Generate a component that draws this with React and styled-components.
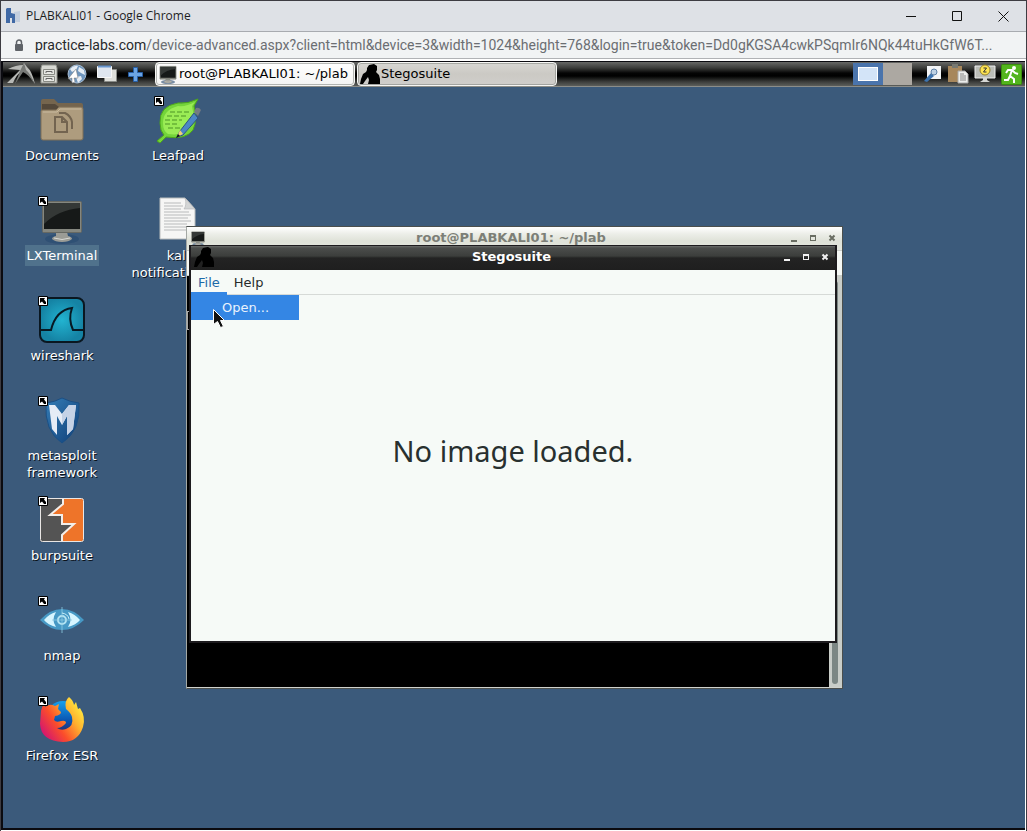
import React from "react";
import styled, { createGlobalStyle, css } from "styled-components";

const Global = createGlobalStyle`
  * { box-sizing: border-box; }
  body { margin: 0; background: #1c1b20; }
  button { font: inherit; color: inherit; background: none; border: 0; padding: 0; margin: 0; }
  a { color: inherit; text-decoration: none; }
  svg { display: block; flex: none; }
`;

const chromeFont = `Roboto, "Open Sans", sans-serif`;
const deskFont = `"DejaVu Sans", sans-serif`;

/* ---------- browser frame ---------- */
const Browser = styled.div`
  display: flex;
  flex-direction: column;
  min-height: 100vh;
  padding: 1px;
  background: #3d3c42;
  font-family: ${chromeFont};
`;
const TitleBar = styled.header`
  display: flex;
  align-items: center;
  height: 31px;
  padding-left: 5px;
  background: #dee1e6;
  border-bottom: 1px solid #a8abb0;
`;
const Title = styled.h1`
  flex: 1;
  margin: 0;
  padding-left: 5px;
  font-family: "Open Sans", sans-serif;
  font-size: 12px;
  line-height: 16px;
  font-weight: 400;
  color: #1d1d1f;
  white-space: nowrap;
`;
const ChromeButton = styled.button`
  display: flex;
  align-items: center;
  justify-content: center;
  width: 46px;
  height: 28px;
`;
const AddressBar = styled.div`
  display: flex;
  align-items: center;
  gap: 11px;
  height: 27px;
  padding: 0 12px 0 13px;
  background: #f1f3f4;
  border-bottom: 1px solid #b0b2b5;
`;
const Url = styled.a`
  flex: 1;
  min-width: 0;
  overflow: hidden;
  font-size: 14px;
  line-height: 20px;
  color: #6b6e72;
  white-space: nowrap;
  b { font-weight: 400; color: #27292c; }
`;
const Viewport = styled.main`
  display: flex;
  flex: 1;
  flex-direction: column;
  padding: 2px 1px 1px 0;
  background: #fff;
`;
const Screen = styled.div`
  display: flex;
  flex: 1;
  flex-direction: column;
  border: solid #0b0b10;
  border-width: 1px 0 2px 2px;
  font-family: ${deskFont};
`;

/* ---------- desktop panel ---------- */
const Panel = styled.nav`
  display: flex;
  align-items: center;
  height: 25px;
  padding: 0 3px 0 4px;
  background: linear-gradient(#676866 0, #3a3b39 6px, #050505 11px, #000 14px, #3e3f3d 20px, #5c5e5b 24px);
  border-bottom: 1px solid #8b8d89;
`;
const Launcher = styled.button`
  display: flex;
  align-items: center;
  justify-content: center;
  width: ${(p) => p.$w || 29}px;
  height: 24px;
`;
const Tasks = styled.div`
  display: flex;
  flex: 1;
  gap: 2px;
  padding-left: 7px;
`;
const Task = styled.button`
  display: flex;
  align-items: center;
  gap: 1px;
  width: 200px;
  height: 24px;
  padding: 0 2px;
  border: 1px solid #f6f6f4;
  border-radius: 4px;
  box-shadow: inset 0 0 0 1px #85888399;
  background: ${(p) => (p.$active ? "linear-gradient(#d8d7d3, #cbc9c4 50%, #d0cecb)" : "linear-gradient(#ffffff, #f4f4f3)")};
  font-size: 13px;
  line-height: 16px;
  color: #000;
  white-space: nowrap;
`;
const Desk = styled.button`
  display: flex;
  align-items: center;
  justify-content: center;
  width: ${(p) => (p.$current ? 30 : 29)}px;
  height: 22px;
  background: ${(p) => (p.$current ? "#4a74ac" : "#aca8a2")};
`;
const DeskPreview = styled.span`
  width: 20px;
  height: 14px;
  background: #d3e4f8;
  border: 1px solid #fff;
`;
const Tray = styled.div`
  display: flex;
  align-items: center;
  gap: 5px;
  padding-left: 12px;
`;
const TrayButton = styled.button`
  display: flex;
  height: 24px;
  align-items: center;
`;

/* ---------- desktop icons ---------- */
const Desktop = styled.section`
  position: relative;
  flex: 1;
  min-height: 741px;
  padding: 9px 1px;
  background: #3b5a7b;
`;
const IconGrid = styled.div`
  display: grid;
  grid-template-columns: repeat(2, 116px);
  grid-auto-rows: 100px;
`;
const Shortcut = styled.button`
  display: flex;
  flex-direction: column;
  align-items: center;
  grid-column: ${(p) => p.$col};
  grid-row: ${(p) => p.$row};
  font-size: 13px;
  line-height: 17px;
  color: #fff;
`;
const IconBox = styled.span`
  position: relative;
  width: 48px;
  height: 48px;
  margin-bottom: 1px;
`;
const Badge = styled.svg`
  position: absolute;
  top: 0;
  left: 0;
`;
const Label = styled.span`
  max-width: 104px;
  padding: 2px;
  text-shadow: 1px 1px 0 #000c;
  ${(p) => p.$selected && css`background: #50728c; text-shadow: none;`}
`;

/* ---------- windows ---------- */
const Window = styled.section`
  position: absolute;
  display: flex;
  flex-direction: column;
  left: ${(p) => p.$x}px;
  top: ${(p) => p.$y}px;
  width: ${(p) => p.$w}px;
  height: ${(p) => p.$h}px;
  border: solid ${(p) => (p.$dark ? "#1d1b1e" : "#4b4f4d")};
  border-left-color: ${(p) => (p.$dark ? "#1d1b1e" : "#a4a8a4")};
  border-width: ${(p) => (p.$dark ? "1px 2px 2px" : "1px")};
`;
const WindowBar = styled.header`
  display: flex;
  align-items: center;
  height: ${(p) => (p.$dark ? 24 : 23)}px;
  padding: 0 1px 2px 3px;
  color: ${(p) => (p.$dark ? "#fff" : "#7c7f77")};
  background: ${(p) => (p.$dark ? "linear-gradient(#6a6d6a 0, #4b4d4b 2px, #3c3e3c 10px, #232323 12px, #1f1f1f)" : "linear-gradient(#fff, #eceee8 7px, #dfe2d8 14px, #e4e7de)")};
`;
const WindowTitle = styled.h2`
  flex: 1;
  margin: 0;
  padding-left: 32px;
  font-size: 13px;
  line-height: 18px;
  font-weight: 700;
  text-align: center;
  white-space: nowrap;
`;
const WindowButton = styled.button`
  display: flex;
  width: 19px;
  height: 18px;
  align-items: center;
  justify-content: center;
`;
const TerminalMenu = styled.div`
  height: 26px;
  background: #f5f8f5;
  border: solid #c9ccc8;
  border-width: 1px 0;
`;
const TerminalBody = styled.div`
  display: flex;
  flex: 1;
  justify-content: space-between;
  background: #000;
  border-bottom: 1px solid #d0d2cc;
`;
const HollowCursor = styled.span`
  width: 8px;
  height: 19px;
  margin-top: 35px;
  border: 1px solid #aaa;
`;
const ScrollTrack = styled.div`
  display: flex;
  width: 13px;
  padding: 5px 4px 3px 3px;
  background: #c9cdc8;
`;
const ScrollThumb = styled.div`
  flex: 1;
  border-radius: 3px;
  background: #7c8784;
`;
const MenuBar = styled.div`
  display: flex;
  height: 25px;
  background: #f6faf7;
  border-bottom: 1px solid #d6dad7;
`;
const MenuItem = styled.button`
  height: 25px;
  padding: 0 7px;
  font-size: 13px;
  line-height: 24px;
  color: ${(p) => (p.$open ? "#1c6aa8" : "#272c2b")};
  ${(p) => p.$open && css`border-bottom: 3px solid #3486e4; line-height: 25px;`}
`;
const Canvas = styled.div`
  position: relative;
  display: flex;
  flex: 1;
  align-items: center;
  justify-content: center;
  background: #f6faf7;
`;
const Message = styled.p`
  margin: 0;
  padding-bottom: 34px;
  font-family: "Noto Sans", sans-serif;
  font-size: 29px;
  line-height: 32px;
  color: #28302f;
`;
const Dropdown = styled.div`
  position: absolute;
  top: 0;
  left: 0;
  width: 108px;
  background: #3486e4;
`;
const DropItem = styled.button`
  width: 100%;
  height: 25px;
  padding: 0 31px;
  font-size: 13px;
  line-height: 24px;
  color: #eaf3fd;
  text-align: left;
`;
const Pointer = styled.svg`
  position: absolute;
  left: 22px;
  top: 14px;
`;

/* ---------- drawings ---------- */
const Monitor = ({ w, h }) => (
  <svg width={w} height={h} viewBox="0 0 48 48" preserveAspectRatio="none">
    <ellipse cx="24" cy="43" rx="17" ry="5" fill="#284a70" opacity=".6" />
    <path d="M18 36h11l1 4q4 1 4 3-3 3-10 3t-10-3q0-2 4-3z" fill="#9b9c96" />
    <path d="M16 42q8 3 16 0" stroke="#d8d9d4" fill="none" />
    <rect x="4.500" y="5.500" width="39" height="31" rx="1" fill="#85877f" stroke="#666862" />
    <rect x="6" y="7" width="36" height="26" fill="#161918" />
    <path d="M6 7h36v5Q20 14 6 28z" fill="#343836" />
  </svg>
);
const Figure = () => (
  <svg width="20" height="20" viewBox="0 0 20 20">
    <path d="M7 4l2-3 5-1 3 2v4l-1 2 3 3 1 4v5H8l1-4-1-3-3 4-2 3H0l1-5 2-5 3-2 1-2z" fill="#000" />
  </svg>
);
const Buttons = ({ color }) => (
  <>
    <WindowButton aria-label="Minimize"><svg width="8" height="8"><path d="M1 6h6v2H1z" fill={color} /></svg></WindowButton>
    <WindowButton aria-label="Maximize"><svg width="8" height="8"><path d="M1 1h6v6H1zM2 3v3h4V3z" fill={color} fillRule="evenodd" /></svg></WindowButton>
    <WindowButton aria-label="Close"><svg width="8" height="8"><path d="M1.500 1.500l5 5M6.500 1.500l-5 5" stroke={color} strokeWidth="2" /></svg></WindowButton>
  </>
);

const art = {
  documents: (
    <svg width="48" height="48" viewBox="-1 -1 48 48">
      <path d="M2 4q0-2 2-2h11l4 4h23q2 0 2 2v30H2z" fill="#75654e" />
      <path d="M3 7h13l4 3h22v4H3z" fill="#54483a" />
      <path d="M2 14q0-1 2-1h13l3-3h22q2 0 2 2v29q0 2-2 2H4q-2 0-2-2z" fill="#ae9c7e" stroke="#7f6f56" />
      <path d="M4 15h14l3-3h21" stroke="#c9ba9f" fill="none" />
      <path d="M16 20h7l5 5v10H16zM23 20v5h5M20 16h6q6 3 7 9v7" fill="none" stroke="#736450" strokeWidth="2" />
    </svg>
  ),
  leafpad: (
    <svg width="48" height="48">
      <path d="M44 3Q34 8 24 7 5 10 6 27q0 8 4 12l-7 6 3 2 6-6q20 3 27-7 5-11 1-24z" fill="#74d43a" stroke="#4da61c" />
      <path d="M41 6Q32 11 24 10 9 14 9 27q0 8 5 11 16 2 22-6 5-11 2-22z" fill="#9aec55" />
      <path d="M16 16h19M13 20h20M11 24h17M11 28h14M14 32h12" stroke="#4c9427" strokeDasharray="5 2" fill="none" />
      <path d="M26 35l-3 6 6-2 15-17-4-5z" fill="#4c86c4" stroke="#2d5382" />
      <path d="M26 34l-3 7 6-3z" fill="#f0cf7b" /><path d="M22 42l2-4 2 2z" fill="#111" />
      <path d="M40 16l2-4q3-1 5 2l-3 6z" fill="#747b83" />
    </svg>
  ),
  terminal: <Monitor w="48" h="48" />,
  note: (
    <svg width="48" height="48">
      <path d="M6 2h25l10 11v30H6z" fill="#f6f6f5" stroke="#b9bcbd" />
      <path d="M31 2q2 7-1 11h11z" fill="#d4d6d6" stroke="#a8abac" strokeWidth=".5" />
      <path d="M10 7h17M10 10h19M10 13h17M10 16h25M10 19h27M10 22h24M10 25h27M10 28h23M10 31h26M10 34h25" stroke="#b8babb" />
    </svg>
  ),
  wireshark: (
    <svg width="48" height="48">
      <defs><radialGradient id="sea"><stop offset="0" stopColor="#22b4d1" /><stop offset="1" stopColor="#1583a4" /></radialGradient></defs>
      <rect x="2" y="2" width="44" height="44" rx="7" fill="url(#sea)" stroke="#0a1720" strokeWidth="2" />
      <path d="M2 34h11Q18 14 34 12q-4 11 1 22h11" fill="none" stroke="#071923" strokeWidth="2" />
    </svg>
  ),
  metasploit: (
    <svg width="48" height="48">
      <defs><linearGradient id="shield" x2="1" y2="1"><stop stopColor="#357eb7" /><stop offset="1" stopColor="#103f78" /></linearGradient></defs>
      <path d="M8 7q9-1 16-5 8 4 17 5 2 28-17 40Q6 35 8 7z" fill="url(#shield)" stroke="#1b4f84" />
      <path d="M11 9l6 0 7 9 7-9 7 0-3 24-6 6V20l-5 9-5-9v19l-5-6z" fill="#e6ecf6" />
      <path d="M24 18l7-9h7l-3 24-6 6V20l-5 9z" fill="#c5d2e6" />
    </svg>
  ),
  burp: (
    <svg width="48" height="48">
      <rect x="2" y="2" width="44" height="44" rx="2" fill="#545454" />
      <path d="M25 3h20v42H24v-7l11-10H25v-9H12l12-10z" fill="#ee7429" />
      <path d="M25 3v5L12 19h12v9h12L24 39v6" fill="none" stroke="#f3eeea" strokeWidth="2" />
      <rect x="2.500" y="2.500" width="43" height="43" rx="2" fill="none" stroke="#e9e6e4" />
    </svg>
  ),
  nmap: (
    <svg width="48" height="48">
      <path d="M2 24Q12 13 24 13t22 11Q36 34 24 34T2 24z" fill="#4799c5" />
      <path d="M6 24q5-6 12-8-5 8 0 15-8-2-12-7zM42 24q-5-6-12-8 5 8 0 15 8-2 12-7z" fill="#d6f5ff" />
      <circle cx="24" cy="24" r="4" fill="none" stroke="#b4e4f3" strokeWidth="2" />
      <path d="M24 11v26M14 24h20" stroke="#90cde4" opacity=".8" />
      <path d="M24 17q6 1 7 6" stroke="#c8eff9" fill="none" />
    </svg>
  ),
  firefox: (
    <svg width="48" height="48" viewBox="0 -1 48 48">
      <defs>
        <linearGradient id="fox" x1="1" y1="0" x2="0" y2=".7"><stop offset=".1" stopColor="#fff443" /><stop offset=".4" stopColor="#ffb02e" /><stop offset=".7" stopColor="#fb4d2b" /><stop offset="1" stopColor="#d5186d" /></linearGradient>
        <linearGradient id="sky" x2="0" y2="1"><stop stopColor="#13a0ef" /><stop offset=".6" stopColor="#0a51ad" /><stop offset="1" stopColor="#31215e" /></linearGradient>
      </defs>
      <circle cx="25" cy="21" r="17" fill="url(#sky)" />
      <path d="M3 14q1-5 4-8v4q5-4 10-1l4-2-1 5 3 3q0 3-6 4l-1 4q2 3 7 1 5-1 5 2-4 5-9 5 4 3 9 1 8-3 6-12-1-4-6-8-2-8 3-12 4 3 5 8l2-3 2 7 2-1q6 9 3 19-5 15-20 15Q3 44 2 27z" fill="url(#fox)" />
    </svg>
  ),
};

const shortcuts = [
  { art: "documents", text: "Documents", col: 1, row: 1 },
  { art: "leafpad", text: "Leafpad", col: 2, row: 1, link: true },
  { art: "terminal", text: "LXTerminal", col: 1, row: 2, link: true, selected: true },
  { art: "note", text: "kali notifications…", col: 2, row: 2 },
  { art: "wireshark", text: "wireshark", col: 1, row: 3, link: true },
  { art: "metasploit", text: "metasploit framework", col: 1, row: 4, link: true },
  { art: "burp", text: "burpsuite", col: 1, row: 5, link: true },
  { art: "nmap", text: "nmap", col: 1, row: 6, link: true },
  { art: "firefox", text: "Firefox ESR", col: 1, row: 7, link: true },
];

export default function App() {
  return (
    <Browser>
      <Global />
      <TitleBar>
        <svg width="15" height="16">
          <path d="M8 4l6-1v11H8z" fill="#c3cede" />
          <path d="M1 0h4v5l4 1v9H6v-5H4v5H0V1z" fill="#4069a6" />
        </svg>
        <Title>PLABKALI01 - Google Chrome</Title>
        <ChromeButton aria-label="Minimize"><svg width="11" height="11"><path d="M0 5.500h10" stroke="#111" /></svg></ChromeButton>
        <ChromeButton aria-label="Maximize"><svg width="11" height="11"><path d="M.5.500h9v9h-9z" stroke="#111" fill="none" /></svg></ChromeButton>
        <ChromeButton aria-label="Close"><svg width="11" height="11"><path d="M.5.500l10 10M10.500.500l-10 10" stroke="#111" fill="none" /></svg></ChromeButton>
      </TitleBar>
      <AddressBar>
        <svg width="10" height="13"><path d="M2.500 6V3.500a2.500 2.500 0 0 1 5 0V6" fill="none" stroke="#5f6368" strokeWidth="1.500" /><rect x="1" y="5" width="8" height="7" rx="1" fill="#5f6368" /></svg>
        <Url href="#"><b>practice-labs.com</b>/device-advanced.aspx?client=html&amp;device=3&amp;width=1024&amp;height=768&amp;login=true&amp;token=Dd0gKGSA4cwkPSqmIr6NQk44tuHkGfW6T...</Url>
      </AddressBar>
      <Viewport>
        <Screen>
          <Panel>
            <Launcher $w={27} aria-label="Menu">
              <svg width="28" height="22">
                <path d="M0 20L13 7 1 6Q9 2 16 2l1-2 3 4q5 4 8 17-5-9-10-12L15 8q-6 4-9 12z" fill="#b7b8b5" />
                <path d="M17 0l-4 8-5 13 8-12q5 2 11 11-3-9-8-13z" fill="#777976" />
              </svg>
            </Launcher>
            <Launcher aria-label="Files">
              <svg width="18" height="20">
                <path d="M2 1h14l1 3v15H1V4z" fill="#d7d8d3" stroke="#92948e" />
                <path d="M3.500 5.500h11v5h-11zM3.500 12.500h11v5h-11z" fill="#e6e7e3" stroke="#888a84" />
                <path d="M6 9V7.500h6V9M6 16v-1.500h6V16" fill="none" stroke="#666" />
              </svg>
            </Launcher>
            <Launcher $w={28} aria-label="Web browser">
              <svg width="20" height="20">
                <circle cx="10" cy="10" r="9" fill="#6e95bd" stroke="#a9bfd6" />
                <path d="M3 5q4-4 8-3l-2 4-4 2zM12 3l5 3 1 5-4-2-3-2zM9 13l5-1 1 3-4 4z" fill="#e6edf4" />
                <path d="M9 5l-8 10 4-1v5l3-1-1-4h4z" fill="#fff" stroke="#777" strokeWidth=".5" />
              </svg>
            </Launcher>
            <Launcher $w={31} aria-label="Minimize all windows">
              <svg width="20" height="18">
                <path d="M7.500 4.500h12v12h-12z" fill="#dedfdb" stroke="#8a8c88" />
                <path d="M.5 1.500h14v11H.5z" fill="#dfe6ef" stroke="#f7f7f7" /><path d="M1 1.500h13" stroke="#6896cf" strokeWidth="2" />
              </svg>
            </Launcher>
            <Launcher $w={26} aria-label="Add">
              <svg width="15" height="15"><path d="M5.500.500h4v5h5v4h-5v5h-4v-5h-5v-4h5z" fill="#6ca4e3" stroke="#275fa6" /></svg>
            </Launcher>
            <Tasks>
              <Task><Monitor w="20" h="20" />root@PLABKALI01: ~/plab</Task>
              <Task $active><Figure />Stegosuite</Task>
            </Tasks>
            <Desk $current aria-label="Desktop 1"><DeskPreview /></Desk>
            <Desk aria-label="Desktop 2" />
            <Tray>
              <TrayButton aria-label="Settings"><svg width="18" height="20"><path d="M3 2h14v13H3z" fill="#f3f5f7" /><path d="M0 17l7-8 3 3-7 6z" fill="#3c73af" /><circle cx="10" cy="8" r="3" fill="#bcd0e4" stroke="#5c7fa5" /></svg></TrayButton>
              <TrayButton aria-label="Clipboard"><svg width="22" height="20"><path d="M1 2h14v16H1z" fill="#a7875c" /><path d="M5 0h6v4H5z" fill="#777871" /><path d="M11 7h7l3 3v9H11z" fill="#ecedeb" stroke="#aaa" /><path d="M13 10h4M13 12h6M13 14h6M13 16h6" stroke="#888" /></svg></TrayButton>
              <TrayButton aria-label="Power manager"><svg width="22" height="20"><path d="M1 2h20v12H1z" fill="#bbbdb8" stroke="#eee" /><path d="M9 14h4v2l3 2H6l3-2z" fill="#d6d7d4" /><circle cx="11" cy="6" r="5" fill="#ffe452" stroke="#93802a" /><path d="M9.500 4h3l-3 4h3" fill="none" stroke="#333" /></svg></TrayButton>
              <TrayButton aria-label="Log out"><svg width="21" height="21"><rect x=".5" y=".5" width="20" height="20" rx="1" fill="#53b51d" stroke="#398d0e" /><circle cx="13" cy="4" r="2" fill="#fff" /><path d="M5 9l2-3h4l3 3 3 1M11 6l-2 6 4 3v4M9 12l-2 4H3" fill="none" stroke="#fff" strokeWidth="2" /></svg></TrayButton>
            </Tray>
          </Panel>
          <Desktop>
            <IconGrid>
              {shortcuts.map((s) => (
                <Shortcut key={s.text} $col={s.col} $row={s.row}>
                  <IconBox>
                    {art[s.art]}
                    {s.link && (
                      <Badge width="10" height="10"><path d="M.5.500h9v9h-9z" fill="#fff" stroke="#000" /><path d="M2 2h5L6 3.500 8 6v2H6L4 5.500 2 7z" fill="#000" /></Badge>
                    )}
                  </IconBox>
                  <Label $selected={s.selected}>{s.text}</Label>
                </Shortcut>
              ))}
            </IconGrid>
            <Window $x={183} $y={139} $w={657} $h={463}>
              <WindowBar>
                <Monitor w="16" h="16" />
                <WindowTitle>root@PLABKALI01: ~/plab</WindowTitle>
                <Buttons color="#696d62" />
              </WindowBar>
              <TerminalMenu />
              <TerminalBody>
                <HollowCursor />
                <ScrollTrack><ScrollThumb /></ScrollTrack>
              </TerminalBody>
            </Window>
            <Window $dark $x={186} $y={158} $w={648} $h={398}>
              <WindowBar $dark>
                <Figure />
                <WindowTitle>Stegosuite</WindowTitle>
                <Buttons color="#f2f2f2" />
              </WindowBar>
              <MenuBar>
                <MenuItem $open>File</MenuItem>
                <MenuItem>Help</MenuItem>
              </MenuBar>
              <Canvas>
                <Message>No image loaded.</Message>
                <Dropdown><DropItem>Open...</DropItem></Dropdown>
                <Pointer width="12" height="19"><path d="M.5.500v15l4-3 3 6 3-1-3-6h4z" fill="#111" stroke="#fff" /></Pointer>
              </Canvas>
            </Window>
          </Desktop>
        </Screen>
      </Viewport>
    </Browser>
  );
}
